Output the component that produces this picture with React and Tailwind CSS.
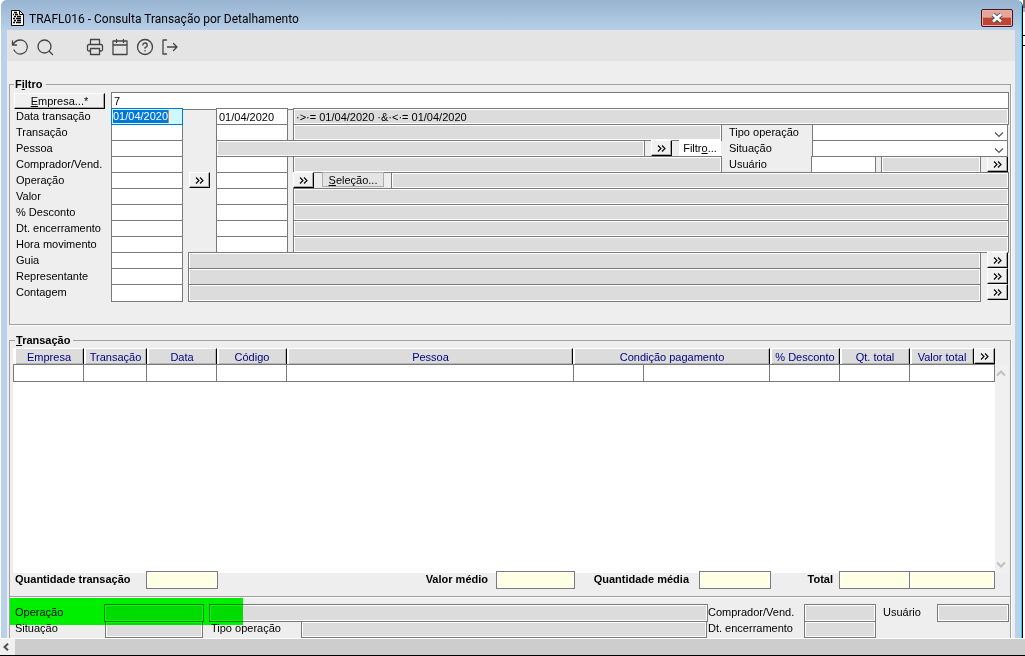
import React from "react";

const cx = (...parts) => parts.filter(Boolean).join(" ");

const EDGE = "border border-[#7a7a7a] rounded-none outline-none shrink-0 px-[2px] text-black";

function Field({ label, tone = "white", className, ...rest }) {
  const tones = {
    white: "bg-white",
    gray: "bg-[#dcdcdc] shadow-[inset_0_0_0_1px_#ffffff]",
    cream: "bg-[#ffffe4] shadow-[inset_0_0_0_1px_#ffffff]",
  };
  return (
    <input
      type="text"
      aria-label={label}
      readOnly={tone !== "white"}
      className={cx(EDGE, tones[tone], className)}
      {...rest}
    />
  );
}

function MoreButton({ label, className }) {
  return (
    <button
      type="button"
      aria-label={label}
      className={cx(
        "flex h-[16px] w-[21px] shrink-0 items-center justify-center border-t border-l border-t-white border-l-white border-r border-b border-r-black border-b-black bg-[#f0f0f0] shadow-[inset_-1px_-1px_0_#a8a8a8]",
        className
      )}
    >
      <svg width="9" height="7" viewBox="0 0 9 7" fill="none" stroke="#000" strokeWidth="1.1">
        <path d="M1 0.5 L4 3.5 L1 6.5 M5 0.5 L8 3.5 L5 6.5" />
      </svg>
    </button>
  );
}

function RowLabel({ id, children }) {
  return (
    <label htmlFor={id} className="w-[96px] shrink-0 pl-[1px] whitespace-nowrap leading-[16px]">
      {children}
    </label>
  );
}

function FilterRow({ id, label, middle, second = true, value, secondValue, children }) {
  return (
    <div className="flex h-[16px] items-start">
      <RowLabel id={id}>{label}</RowLabel>
      <Field id={id} className="h-[17px] w-[72px]" defaultValue={value} />
      <div className="flex w-[33px] shrink-0 justify-center">{middle}</div>
      {second && (
        <Field label={label + " final"} className="mr-[5px] h-[17px] w-[72px]" defaultValue={secondValue} />
      )}
      {children}
    </div>
  );
}

function WideRow({ id, label }) {
  return (
    <div className="flex h-[16px] items-start">
      <RowLabel id={id}>{label}</RowLabel>
      <Field id={id} className="mr-[5px] h-[18px] w-[72px]" />
      <Field label={label + " descrição"} tone="gray" className="mr-[6px] h-[18px] min-w-0 flex-1" />
      <MoreButton label={"Pesquisar " + label} className="mr-[1px]" />
    </div>
  );
}

function SideSelect({ id, label }) {
  return (
    <div className="flex h-[16px] items-start">
      <label htmlFor={id} className="w-[90px] shrink-0 pl-[7px] leading-[16px]">
        {label}
      </label>
      <div className="relative mr-[1px] h-[17px] flex-1">
        <select id={id} className="block h-[17px] w-full appearance-none rounded-none border border-[#7a7a7a] bg-white">
          <option></option>
        </select>
        <svg className="pointer-events-none absolute top-[7px] right-[4px]" width="10" height="7" viewBox="0 0 10 7" fill="none" stroke="#555" strokeWidth="1.2">
          <path d="M1 1.5 L5 5.5 L9 1.5" />
        </svg>
      </div>
    </div>
  );
}

function ToolButton({ label, className, children }) {
  return (
    <button type="button" aria-label={label} className={cx("flex h-[25px] w-[25px] items-center justify-center", className)}>
      <svg width="18" height="18" viewBox="0 0 18 18" fill="none" stroke="#444" strokeWidth="1.3" strokeLinecap="round" strokeLinejoin="round">
        {children}
      </svg>
    </button>
  );
}

const headers = [
  { name: "Empresa" },
  { name: "Transação" },
  { name: "Data" },
  { name: "Código" },
  { name: "Pessoa" },
  { name: "Condição pagamento", span: 2 },
  { name: "% Desconto" },
  { name: "Qt. total" },
  { name: "Valor total", more: true },
];

function TransactionTable() {
  return (
    <table className="w-full table-fixed border-collapse">
      <colgroup>
        <col className="w-[70px]" />
        <col className="w-[63px]" />
        <col className="w-[70px]" />
        <col className="w-[70px]" />
        <col />
        <col className="w-[70px]" />
        <col className="w-[126px]" />
        <col className="w-[70px]" />
        <col className="w-[70px]" />
        <col className="w-[85px]" />
      </colgroup>
      <thead>
        <tr className="h-[16px]">
          {headers.map((h) => (
            <th key={h.name} colSpan={h.span || 1} className="p-0 font-normal text-[#000080]">
              <div className="flex h-[16px]">
                <div className="flex-1 border-t border-r border-l-2 border-t-white border-r-black border-l-white bg-[#dcdcdc] text-center leading-[16px] whitespace-nowrap shadow-[inset_-1px_-1px_0_#b4b4b4]">
                  {h.name}
                </div>
                {h.more && <MoreButton label="Mais colunas" />}
              </div>
            </th>
          ))}
        </tr>
      </thead>
      <tbody>
        <tr className="h-[17px]">
          {Array.from({ length: 10 }, (_, i) => (
            <td key={i} className="border border-[#7a7a7a] bg-white p-0" />
          ))}
        </tr>
      </tbody>
    </table>
  );
}

function TitleBar() {
  return (
    <header className="flex h-[30px] items-center rounded-t-[6px] bg-linear-to-b from-[#98b4d1] to-[#b7cfe8] pt-[6px] pr-[8px] pl-[10px]">
      <svg width="13" height="16" viewBox="0 0 13 16" className="shrink-0">
        <path d="M.5 .5h8l4 4V15.500H.5z" fill="#fff" />
        <path d="M.5 15.500V.5h8M8.500 .5l4 4V15.500H.5" fill="none" stroke="#000" />
        <path d="M8.500 1v3.500h4" fill="none" stroke="#000" />
        <path d="M3 2.500h3M2 4.500h1M4 4.500h3M3 6.500h2M6 6.500h4M2 8.500h2M5 8.500h5M3 10.500h2M6 10.500h4M2 12.500h2M5 12.500h5" stroke="#000" strokeWidth="1.300" />
      </svg>
      <h1 className="flex-1 pl-[5px] pt-[1px] font-[Roboto,sans-serif] text-[12px] leading-[16px]">
        TRAFL016 - Consulta Transação por Detalhamento
      </h1>
      <button
        type="button"
        aria-label="Fechar"
        className="flex h-[18px] w-[32px] items-center justify-center rounded-[2px] border border-[#43141b] bg-linear-to-b from-[#e5a59b] from-45% to-[#bf4433] to-50% shadow-[inset_0_0_0_1px_#e8b3aa]"
      >
        <svg width="12" height="10" viewBox="0 0 12 10">
          <path d="M2 1.500 L10 8.500 M10 1.500 L2 8.500" stroke="#4a5560" strokeWidth="4.500" />
          <path d="M2 1.500 L10 8.500 M10 1.500 L2 8.500" stroke="#fff" strokeWidth="2.600" />
        </svg>
      </button>
    </header>
  );
}

function Toolbar() {
  return (
    <nav aria-label="Ferramentas" className="flex h-[31px] items-center bg-[#e4e4e4] pt-[2px]">
      <ToolButton label="Atualizar">
        <path d="M1.500 3 V7 H5.500 M1.800 7 C3.500 3.500 6 2 9.300 2 A7 7 0 1 1 3 12" />
      </ToolButton>
      <ToolButton label="Pesquisar" className="mr-[25px]">
        <circle cx="8.500" cy="8.500" r="6.500" />
        <path d="M13.200 13.200 L16.500 16.500" />
      </ToolButton>
      <ToolButton label="Imprimir">
        <path d="M4.500 6.500 V1.500 H13.500 V6.500 M4.500 13 H3 Q1.500 13 1.500 11.500 V8 Q1.500 6.500 3 6.500 H15 Q16.500 6.500 16.500 8 V11.500 Q16.500 13 15 13 H13.500 M4.500 10.500 H13.500 V16.500 H4.500 Z" />
      </ToolButton>
      <ToolButton label="Calendário">
        <path d="M2 3 H16 V16.500 H2 Z M2 7 H16 M5.500 1.500 V4.500 M12.500 1.500 V4.500" />
      </ToolButton>
      <ToolButton label="Ajuda">
        <circle cx="9" cy="9" r="7.500" />
        <path d="M6.800 7 A2.200 2.200 0 1 1 9 9.400 V10.300 M9 12.600 V12.900" />
      </ToolButton>
      <ToolButton label="Sair">
        <path d="M5.500 2 H2 V16 H5.500 M6.500 9 H16 M12.500 5.500 L16 9 L12.500 12.500" />
      </ToolButton>
    </nav>
  );
}

function FilterPanel() {
  return (
    <fieldset className="mr-[4px] ml-[2px] mt-[16px] min-w-0 border border-[#a0a0a0] pr-[1px] pb-[24px] pl-[4px] shadow-[1px_1px_0_#ffffff]">
      <legend className="px-[1px] pr-[3px] font-bold leading-[15px]">
        F<u>i</u>ltro
      </legend>
      <div className="flex h-[16px] items-start">
        <button
          type="button"
          className="mr-[6px] mt-[1px] h-[16px] w-[91px] shrink-0 border-t border-l border-r border-b border-t-white border-l-white border-r-black border-b-black bg-[#f0f0f0] leading-[14px] shadow-[inset_-1px_-1px_0_#a8a8a8]"
        >
          <u>E</u>mpresa...*
        </button>
        <Field label="Empresa" className="h-[18px] min-w-0 flex-1" defaultValue="7" />
      </div>
      <div className="pl-[1px]">
        <div className="flex h-[16px] items-start">
          <RowLabel id="data">Data transação</RowLabel>
          <div className="relative flex h-[17px] w-[72px] shrink-0 border border-[#0078d7] bg-[#ccf8ff]">
            <input
              id="data"
              type="text"
              defaultValue="01/04/2020"
              className="my-[1px] ml-[1px] h-[13px] w-[56px] border-r border-[#e08040] bg-[#0078d7] text-white outline-none"
            />
          </div>
          <div className="w-[33px] shrink-0" />
          <Field label="Data final" className="mr-[5px] h-[17px] w-[72px]" defaultValue="01/04/2020" />
          <Field label="Critério" tone="gray" className="h-[17px] min-w-0 flex-1" defaultValue="·>·= 01/04/2020 ·&·<·= 01/04/2020" />
        </div>
        <div className="flex items-start">
          <div className="min-w-0 flex-1">
            <FilterRow id="transacao" label="Transação">
              <Field label="Critério transação" tone="gray" className="h-[17px] min-w-0 flex-1" />
            </FilterRow>
            <FilterRow id="pessoa" label="Pessoa" second={false}>
              <Field label="Critério pessoa" tone="gray" className="mr-[6px] h-[17px] min-w-0 flex-1" />
              <MoreButton label="Pesquisar pessoa" className="mr-[7px]" />
              <button type="button" className="mr-[1px] h-[16px] w-[42px] shrink-0 bg-white leading-[16px]">
                Filtr<u>o</u>...
              </button>
            </FilterRow>
            <FilterRow id="comprador" label="Comprador/Vend.">
              <Field label="Critério comprador" tone="gray" className="h-[17px] min-w-0 flex-1" />
            </FilterRow>
          </div>
          <div className="w-[287px] shrink-0">
            <SideSelect id="tipo" label="Tipo operação" />
            <SideSelect id="situacao" label="Situação" />
            <div className="flex h-[16px] items-start">
              <label htmlFor="usuario" className="w-[89px] shrink-0 pl-[7px] leading-[16px]">
                Usuário
              </label>
              <Field id="usuario" className="mr-[5px] h-[17px] w-[65px]" />
              <Field label="Nome do usuário" tone="gray" className="mr-[6px] h-[17px] min-w-0 flex-1" />
              <MoreButton label="Pesquisar usuário" className="mr-[1px]" />
            </div>
          </div>
        </div>
        <FilterRow id="operacao" label="Operação" middle={<MoreButton label="Operação inicial" />}>
          <MoreButton label="Operação final" className="mr-[8px]" />
          <button type="button" className="mr-[7px] h-[15px] w-[62px] shrink-0 border border-[#adadad] bg-[#e4e4e4] leading-[14px]">
            <u>S</u>eleção...
          </button>
          <Field label="Critério operação" tone="gray" className="h-[17px] min-w-0 flex-1" />
        </FilterRow>
        {["Valor", "% Desconto", "Dt. encerramento", "Hora movimento"].map((name, i) => (
          <FilterRow key={name} id={"faixa" + i} label={name}>
            <Field label={"Critério " + name} tone="gray" className="h-[17px] min-w-0 flex-1" />
          </FilterRow>
        ))}
        {["Guia", "Representante", "Contagem"].map((name, i) => (
          <WideRow key={name} id={"grupo" + i} label={name} />
        ))}
      </div>
    </fieldset>
  );
}

function ScrollArrow({ d }) {
  return (
    <svg width="10" height="7" viewBox="0 0 10 7" fill="none" stroke="#bfbfbf" strokeWidth="2">
      <path d={d} />
    </svg>
  );
}

function Summary() {
  return (
    <div className="-mt-[2px] flex h-[25px] items-start pr-[15px] pl-[5px] font-bold leading-[17px]">
      <label htmlFor="qtd" className="w-[131px] shrink-0">Quantidade transação</label>
      <Field id="qtd" tone="cream" className="h-[18px] w-[72px]" />
      <label htmlFor="vmedio" className="min-w-0 flex-1 pr-[8px] text-right">Valor médio</label>
      <Field id="vmedio" tone="cream" className="h-[18px] w-[79px]" />
      <label htmlFor="qmedia" className="w-[124px] shrink-0 pr-[10px] text-right">Quantidade média</label>
      <Field id="qmedia" tone="cream" className="h-[18px] w-[72px]" />
      <label htmlFor="total" className="w-[68px] shrink-0 pr-[6px] text-right">Total</label>
      <Field id="total" tone="cream" className="-mr-px h-[18px] w-[71px]" />
      <Field label="Valor total" tone="cream" className="h-[18px] w-[86px]" />
    </div>
  );
}

function Details() {
  return (
    <div className="relative border-t border-[#a0a0a0] pt-[7px] pr-[1px] pl-[5px] shadow-[inset_0_1px_0_#ffffff]">
      <div className="flex h-[17px] items-start leading-[17px]">
        <label htmlFor="dop" className="w-[89px] shrink-0">Operação</label>
        <Field id="dop" tone="gray" className="mr-[5px] h-[18px] w-[100px]" />
        <Field label="Descrição da operação" tone="gray" className="h-[18px] min-w-0 flex-1" />
        <label htmlFor="dcomp" className="w-[96px] shrink-0">Comprador/Vend.</label>
        <Field id="dcomp" tone="gray" className="h-[18px] w-[72px]" />
        <label htmlFor="dusu" className="w-[61px] shrink-0 pl-[7px]">Usuário</label>
        <Field id="dusu" tone="gray" className="h-[18px] w-[72px]" />
      </div>
      <div className="flex h-[17px] items-start leading-[15px]">
        <label htmlFor="dsit" className="w-[90px] shrink-0">Situação</label>
        <Field id="dsit" tone="gray" className="h-[17px] w-[98px]" />
        <label htmlFor="dtipo" className="w-[98px] shrink-0 pl-[8px]">Tipo operação</label>
        <Field id="dtipo" tone="gray" className="mr-[1px] h-[17px] min-w-0 flex-1" />
        <label htmlFor="denc" className="w-[96px] shrink-0">Dt. encerramento</label>
        <Field id="denc" tone="gray" className="mr-[133px] h-[17px] w-[72px]" />
      </div>
      <div className="pointer-events-none absolute top-[1px] left-0 h-[27px] w-[233px] bg-[#00ff00] mix-blend-multiply" />
    </div>
  );
}

function TransactionPanel() {
  return (
    <fieldset className="mr-[4px] ml-[2px] mt-[8px] flex min-w-0 flex-1 flex-col border border-b-0 border-[#a0a0a0] shadow-[1px_0_0_#ffffff]">
      <legend className="ml-[5px] px-[1px] pr-[3px] font-bold leading-[14px]">
        <u>T</u>ransação
      </legend>
      <div className="flex flex-1 flex-col pt-[1px]">
        <div className="mr-[1px] ml-[3px] flex flex-1">
          <div className="min-w-0 flex-1 bg-white">
            <TransactionTable />
          </div>
          <div className="mt-[17px] flex w-[14px] shrink-0 flex-col items-center justify-between bg-[#f0f0f0] py-[5px] pr-[3px]">
            <ScrollArrow d="M1 5.500 L5 1.500 L9 5.500" />
            <ScrollArrow d="M1 1.500 L5 5.500 L9 1.500" />
          </div>
        </div>
        <Summary />
        <Details />
      </div>
    </fieldset>
  );
}

function Backdrop() {
  return (
    <div className="flex w-[2px] shrink-0 flex-col bg-white">
      <div className="h-[8px] bg-[#6b6b6b]" />
      <div className="h-[4px] bg-[#a9b4c4]" />
      <div className="h-[24px] border-b border-black" />
      <div className="h-[10px] border-b border-black" />
    </div>
  );
}

export default function App() {
  return (
    <div className="flex min-h-screen flex-col bg-white font-['Liberation_Sans',Arial,sans-serif] text-[11px] text-black">
      <div className="flex flex-1 bg-white pl-[1px]">
        <div className="flex min-w-0 flex-1 flex-col rounded-t-[7px] border-r border-black">
          <div className="flex flex-1 flex-col rounded-t-[6px] border-r border-[#35c8ee] bg-[#b9d1ea]">
            <TitleBar />
            <main className="mr-[6px] ml-[6px] flex flex-1 flex-col bg-[#eeeeee]">
              <Toolbar />
              <FilterPanel />
              <TransactionPanel />
            </main>
          </div>
        </div>
        <Backdrop />
      </div>
      <div className="flex h-[18px] items-center border-t border-b border-t-white border-b-black bg-[#cdcdcd]">
        <button type="button" aria-label="Rolar para a esquerda" className="flex h-full w-[15px] items-center justify-center bg-[#f0f0f0] pr-[3px]">
          <svg width="6" height="8" viewBox="0 0 6 8" fill="none" stroke="#505050" strokeWidth="2">
            <path d="M5 0.700 L1.500 4 L5 7.300" />
          </svg>
        </button>
      </div>
    </div>
  );
}
